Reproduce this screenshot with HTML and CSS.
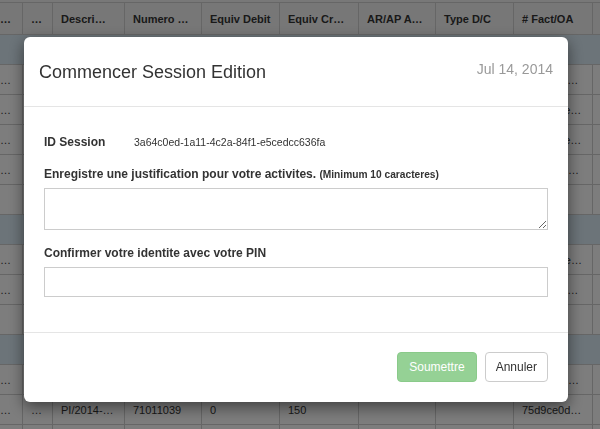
FILE: index.html
```html
<!DOCTYPE html>
<html lang="fr">
<head>
<meta charset="utf-8">
<title>Commencer Session Edition</title>
<link rel="stylesheet" href="styles.css">
</head>
<body>
<div class="grid">
  <table class="grid-table">
    <colgroup>
      <col class="w0"><col class="w1"><col class="w2"><col class="w3"><col class="w4"><col class="w5"><col class="w6"><col class="w7"><col class="w8"><col class="w9">
    </colgroup>
    <thead>
      <tr><th>…</th><th>…</th><th>Descri…</th><th>Numero …</th><th>Equiv Debit</th><th>Equiv Cr…</th><th>AR/AP A…</th><th>Type D/C</th><th># Fact/OA</th><th></th></tr>
    </thead>
    <tbody>
      <tr class="group"><td colspan="10"></td></tr>
      <tr><td>…</td><td></td><td></td><td></td><td></td><td></td><td></td><td></td><td>5a1c92fe…</td><td></td></tr>
      <tr><td>…</td><td></td><td></td><td></td><td></td><td></td><td></td><td></td><td>0b7d44ce…</td><td></td></tr>
      <tr><td>…</td><td></td><td></td><td></td><td></td><td></td><td></td><td></td><td>c3e810be…</td><td></td></tr>
      <tr><td>…</td><td></td><td></td><td></td><td></td><td></td><td></td><td></td><td>91fa27de…</td><td></td></tr>
      <tr class="empty"><td></td><td></td><td></td><td></td><td></td><td></td><td></td><td></td><td></td><td></td></tr>
      <tr class="group"><td colspan="10"></td></tr>
      <tr><td>…</td><td></td><td></td><td></td><td></td><td></td><td></td><td></td><td>e2b6a07e…</td><td></td></tr>
      <tr><td>…</td><td></td><td></td><td></td><td></td><td></td><td></td><td></td><td>4d09c3fe…</td><td></td></tr>
      <tr class="empty"><td></td><td></td><td></td><td></td><td></td><td></td><td></td><td></td><td></td><td></td></tr>
      <tr class="group"><td colspan="10"></td></tr>
      <tr><td>…</td><td></td><td></td><td></td><td></td><td></td><td></td><td></td><td>a81e5f0d…</td><td></td></tr>
      <tr><td>…</td><td>…</td><td>PI/2014-…</td><td>71011039</td><td>0</td><td>150</td><td></td><td></td><td>75d9ce0d…</td><td></td></tr>
      <tr class="empty"><td></td><td></td><td></td><td></td><td></td><td></td><td></td><td></td><td></td><td></td></tr>
    </tbody>
  </table>
</div>

<div class="backdrop"></div>

<div class="modal" role="dialog" aria-labelledby="modal-title">
  <div class="modal-header">
    <h4 class="modal-title" id="modal-title">Commencer Session Edition</h4>
    <span class="modal-date">Jul 14, 2014</span>
  </div>
  <div class="modal-body">
    <div class="id-row">
      <span class="field-label">ID Session</span>
      <span class="session-id">3a64c0ed-1a11-4c2a-84f1-e5cedcc636fa</span>
    </div>
    <div class="form-group">
      <label class="field-label" for="justif">Enregistre une justification pour votre activites. <small>(Minimum 10 caracteres)</small></label>
      <textarea id="justif" class="form-control form-textarea"></textarea>
    </div>
    <div class="form-group">
      <label class="field-label" for="pin">Confirmer votre identite avec votre PIN</label>
      <input id="pin" type="password" class="form-control form-input">
    </div>
  </div>
  <div class="modal-footer">
    <button type="button" class="btn btn-success" disabled>Soumettre</button>
    <button type="button" class="btn btn-default">Annuler</button>
  </div>
</div>
</body>
</html>
```

FILE: styles.css
```css
* {
  box-sizing: border-box;
}

html,
body {
  margin: 0;
  height: 100%;
  overflow: hidden;
}

body {
  font-family: "Liberation Sans", Arial, sans-serif;
  font-size: 12px;
  color: #333;
  background: #f1f1f1;
}

/* ---------- background grid ---------- */
.grid {
  padding-top: 2px;
  margin-left: -8px;
}

.grid-table {
  border-collapse: separate;
  border-spacing: 0;
  table-layout: fixed;
  width: 661px;
  border-top: 1px solid #cdcdcd;
  background: #fbfbfb;
  font-size: 11px;
}

.w0 { width: 31px; }
.w1 { width: 30px; }
.w2 { width: 72px; }
.w3 { width: 77px; }
.w4 { width: 78px; }
.w5 { width: 79px; }
.w6 { width: 77px; }
.w7 { width: 78px; }
.w8 { width: 79px; }
.w9 { width: 60px; }

.grid-table th,
.grid-table td {
  padding: 0 7px 0 8px;
  border-right: 1px solid #cdcdcd;
  border-bottom: 1px solid #cdcdcd;
  white-space: nowrap;
  overflow: hidden;
  text-align: left;
}

.grid-table th {
  background: #efefef;
  font-weight: bold;
  padding-top: 2px;
  line-height: 29px;
}

.grid-table td {
  padding-top: 1px;
  line-height: 28px;
}

.grid-table tr {
  height: 30px;
}

.grid-table .group td {
  background: #d8e8f2;
}

/* ---------- modal ---------- */
.backdrop {
  position: fixed;
  inset: 0;
  background: rgba(0, 0, 0, 0.5);
  z-index: 1;
}

.modal {
  position: fixed;
  top: 37px;
  left: 24px;
  width: 544px;
  background: #fff;
  border-radius: 6px;
  box-shadow: 0 5px 15px rgba(0, 0, 0, 0.5);
  z-index: 2;
}

.modal-header {
  display: flex;
  justify-content: space-between;
  align-items: flex-start;
  padding: 25px 15px 24px;
  border-bottom: 1px solid #e5e5e5;
}

.modal-title {
  margin: 0;
  font-size: 18px;
  font-weight: normal;
  line-height: 20px;
  color: #333;
}

.modal-date {
  font-size: 14px;
  line-height: 14px;
  color: #999;
}

.modal-body {
  padding: 20px;
}

.field-label {
  display: block;
  font-weight: bold;
  font-size: 12px;
  line-height: 17px;
  color: #333;
}

.field-label small {
  font-size: 85%;
}

.id-row {
  display: grid;
  grid-template-columns: 90px 1fr;
  align-items: baseline;
  padding-top: 7px;
  margin-bottom: 15px;
}

.session-id {
  font-size: 10.5px;
}

.form-group {
  margin-bottom: 15px;
}

.form-group .field-label {
  margin-bottom: 5px;
}

.form-control {
  display: block;
  width: 100%;
  margin: 0;
  border: 1px solid #ccc;
  border-radius: 0;
  background: #fff;
  font-family: inherit;
  font-size: 12px;
  color: #333;
  padding: 4px 8px;
}

.form-textarea {
  height: 42px;
}

.form-input {
  height: 30px;
}

.modal-footer {
  display: flex;
  justify-content: flex-end;
  gap: 8px;
  padding: 19px 20px 20px;
  border-top: 1px solid #e5e5e5;
}

.btn {
  height: 30px;
  padding: 0 11px;
  font-family: inherit;
  font-size: 12px;
  border-radius: 4px;
  border: 1px solid transparent;
  cursor: pointer;
}

.btn-success {
  background: #5cb85c;
  border-color: #4cae4c;
  color: #fff;
}

.btn-success:disabled {
  opacity: 0.65;
  cursor: not-allowed;
}

.btn-default {
  padding: 0 10px;
  background: #fff;
  border-color: #ccc;
  color: #333;
}
```
